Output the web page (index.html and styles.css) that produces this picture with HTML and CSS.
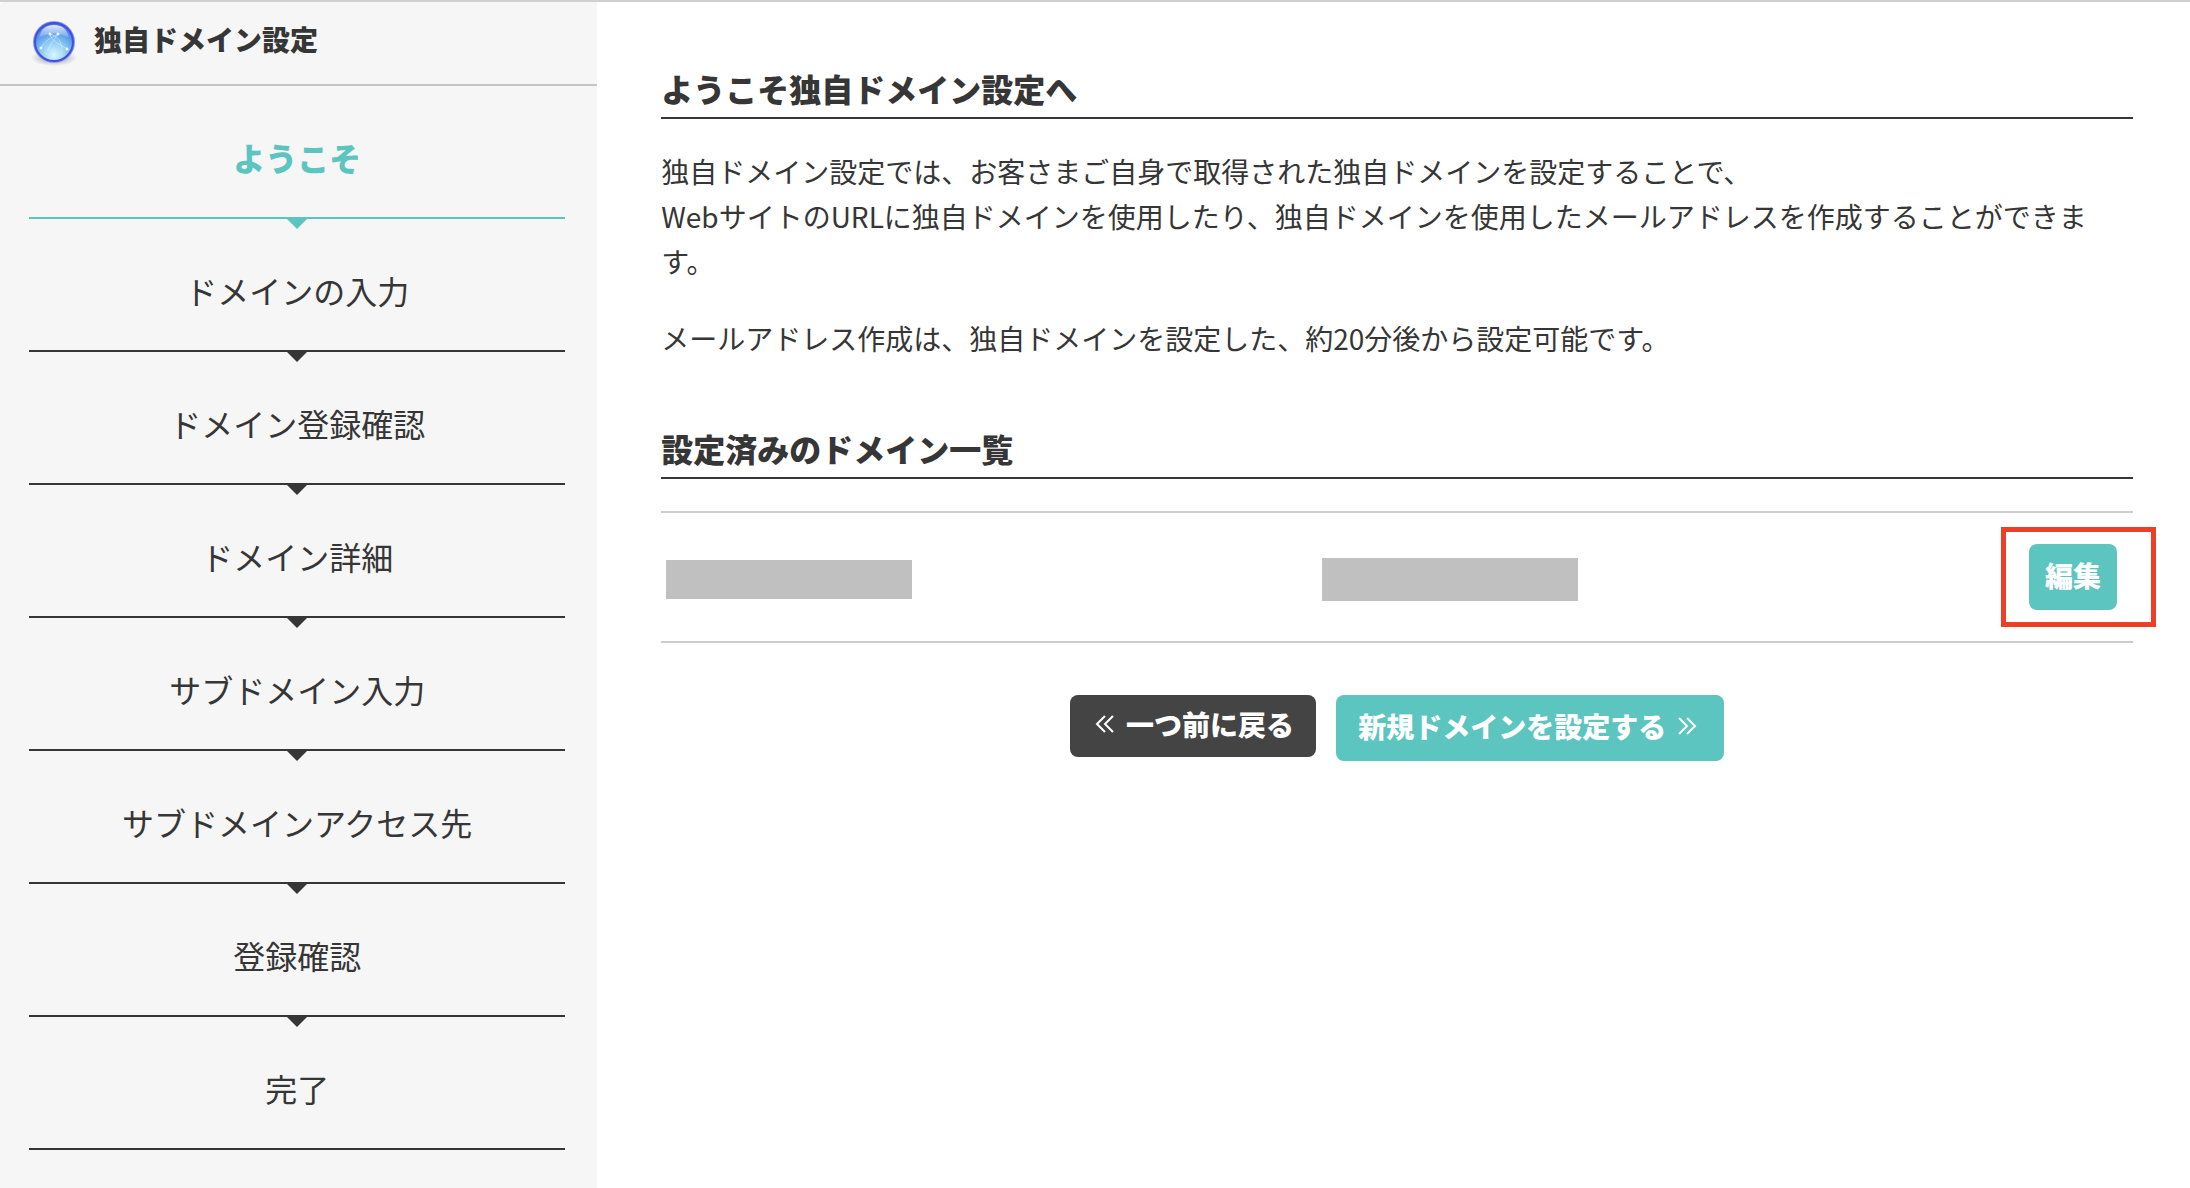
FILE: index.html
```html
<!DOCTYPE html>
<html lang="ja">
<head>
    <meta charset="UTF-8">
    <meta name="viewport" content="width=device-width, initial-scale=1.0">
    <title>独自ドメイン設定</title>
    <link rel="stylesheet" href="styles.css">
</head>
<body>
    <div class="layout">
        <aside class="sidebar">
            <header class="sidebar-header">
                <svg class="globe" viewBox="0 0 48 52" aria-hidden="true">
                    <defs>
                        <radialGradient id="globeFill" cx="50%" cy="82%" r="80%">
                            <stop offset="0" stop-color="#d8f8ff"/>
                            <stop offset="0.4" stop-color="#90ccf4"/>
                            <stop offset="0.7" stop-color="#5a9ce8"/>
                            <stop offset="1" stop-color="#4a68e4"/>
                        </radialGradient>
                        <linearGradient id="globeShine" x1="0" y1="0" x2="0" y2="1">
                            <stop offset="0" stop-color="#ffffff" stop-opacity="0.85"/>
                            <stop offset="1" stop-color="#ffffff" stop-opacity="0.1"/>
                        </linearGradient>
                        <radialGradient id="globeShadow">
                            <stop offset="0" stop-color="#000000" stop-opacity="0.4"/>
                            <stop offset="1" stop-color="#000000" stop-opacity="0"/>
                        </radialGradient>
                    </defs>
                    <ellipse cx="24" cy="41" rx="23" ry="8" fill="url(#globeShadow)"/>
                    <circle cx="24" cy="25" r="20" fill="url(#globeFill)" stroke="#8e98f0" stroke-width="2"/>
                    <circle cx="24" cy="25" r="19" fill="none" stroke="#3f50e2" stroke-width="2"/>
                    <path d="M9 21C11 11 17 8 24 8s13 3 15 13C30 15 18 15 9 21z" fill="url(#globeShine)"/>
                    <g fill="none" stroke="#d4f0ff" stroke-opacity="0.6">
                        <path d="M20 17c2 8 10 10 17 15M28 17c-5 7-9 12-12 21M11 31c4-7 9-10 17-14M20 17c10 3 14 12 11 23"/>
                    </g>
                    <g fill="#ffffff" fill-opacity="0.8">
                        <circle cx="20" cy="17" r="1.5"/>
                        <circle cx="28" cy="17" r="1.5"/>
                        <circle cx="11" cy="31" r="1.5"/>
                        <circle cx="37" cy="32" r="1.5"/>
                    </g>
                </svg>
                <h1 class="sidebar-title">独自ドメイン設定</h1>
            </header>
            <ol class="steps">
                <li class="step current" aria-current="step">ようこそ</li>
                <li class="step">ドメインの入力</li>
                <li class="step">ドメイン登録確認</li>
                <li class="step">ドメイン詳細</li>
                <li class="step">サブドメイン入力</li>
                <li class="step">サブドメインアクセス先</li>
                <li class="step">登録確認</li>
                <li class="step">完了</li>
            </ol>
        </aside>

        <main class="content">
            <section class="section">
                <h2 class="heading">ようこそ独自ドメイン設定へ</h2>
                <p>独自ドメイン設定では、お客さまご自身で取得された独自ドメインを設定することで、<br>WebサイトのURLに独自ドメインを使用したり、独自ドメインを使用したメールアドレスを作成することができます。</p>
                <p>メールアドレス作成は、独自ドメインを設定した、約20分後から設定可能です。</p>
            </section>

            <section class="section">
                <h2 class="heading">設定済みのドメイン一覧</h2>
                <table class="domains">
                    <tbody>
                        <tr>
                            <td class="domain"><span class="mask"></span></td>
                            <td class="domain"><span class="mask mask-large"></span></td>
                            <td class="action">
                                <span class="highlight"><button type="button" class="button">編集</button></span>
                            </td>
                        </tr>
                    </tbody>
                </table>
            </section>

            <div class="buttons">
                <button type="button" class="button button-back">
                    <svg class="arrow" viewBox="0 0 28 28" aria-hidden="true"><path d="M13 6l-8 8 8 8M21 6l-8 8 8 8"/></svg>
                    一つ前に戻る
                </button>
                <button type="button" class="button button-next">
                    新規ドメインを設定する
                    <svg class="arrow" viewBox="0 0 28 28" aria-hidden="true"><path d="M5 6l8 8-8 8M13 6l8 8-8 8"/></svg>
                </button>
            </div>
        </main>
    </div>
</body>
</html>
```
FILE: styles.css
```css
:root {
    --text: #363636;
    --accent: #5cc5c0;
    --dark: #444444;
    --line: #cccccc;
    --sidebar-line: #c4c4c4;
    --sidebar-bg: #f6f6f6;
    --mask: #c0c0c0;
    --highlight: #eb4026;
}

* {
    box-sizing: border-box;
}

body {
    margin: 0;
    background: #ffffff;
    color: var(--text);
    font-family: "Noto Sans CJK JP", sans-serif;
    font-size: 28px;
    line-height: 45px;
}

.layout {
    display: grid;
    grid-template-columns: 3fr 8fr;
    min-height: 100vh;
    border-top: 2px solid #d0d0d0;
}

/* Sidebar */
.sidebar {
    background: var(--sidebar-bg);
    border-top-left-radius: 4px;
}

.sidebar-header {
    display: flex;
    align-items: center;
    gap: 16px;
    height: 84px;
    padding: 0 30px 8px;
    border-bottom: 2px solid var(--sidebar-line);
}

.globe {
    width: 48px;
    height: 52px;
    flex: none;
    margin-top: 8px;
}

.sidebar-title {
    margin: 0;
    font-size: 28px;
    font-weight: 900;
}

.steps {
    list-style: none;
    margin: 0;
    padding: 0 32px 0 29px;
}

.step {
    position: relative;
    padding: 47px 0 36px;
    border-bottom: 2px solid var(--text);
    font-size: 32px;
    line-height: 48px;
    text-align: center;
}

/* arrow below the divider */
.step:not(:last-child)::after {
    content: "";
    position: absolute;
    top: 100%;
    left: 50%;
    margin: 2px 0 0 -10px;
    border: 10px solid transparent;
    border-top-color: var(--text);
    border-bottom: 0;
}

.step.current {
    color: var(--accent);
    border-bottom-color: var(--accent);
    font-weight: 900;
}

.step.current::after {
    border-top-color: var(--accent);
}

/* Main content */
.content {
    min-width: 0;
    padding: 62px 57px 64px 64px;
}

.section {
    margin-bottom: 52px;
}

.heading {
    margin: 0 0 30px;
    padding-bottom: 5px;
    border-bottom: 2px solid var(--text);
    font-size: 32px;
    font-weight: 900;
    line-height: 48px;
}

.section p {
    margin: 0 0 32px;
}

.section p + p {
    margin-bottom: 63px;
}

.domains {
    width: 100%;
    margin-top: 32px;
    table-layout: fixed;
    border-collapse: separate;
    border-spacing: 0;
    border-top: 2px solid var(--line);
    border-bottom: 2px solid var(--line);
}

.domains td {
    height: 128px;
    padding: 0;
    vertical-align: middle;
}

.domains .domain {
    width: 656px;
    padding: 5px 5px 0;
}

.mask {
    display: block;
    width: 246px;
    max-width: 100%;
    height: 39px;
    background: var(--mask);
}

.mask-large {
    width: 256px;
    height: 43px;
}

.domains .action {
    padding-right: 16px;
}

.highlight {
    position: relative;
    display: block;
    width: 88px;
    margin-left: auto;
}

.highlight::after {
    content: "";
    position: absolute;
    inset: -17px -39px -17px -28px;
    border: 5px solid var(--highlight);
    pointer-events: none;
}

/* Buttons */
.button {
    display: flex;
    align-items: center;
    justify-content: center;
    height: 66px;
    padding: 0 16px 4px;
    border: 0;
    border-radius: 8px;
    background: var(--accent);
    color: #ffffff;
    font: inherit;
    font-weight: 900;
    white-space: nowrap;
    cursor: pointer;
}

.buttons {
    display: flex;
    flex-wrap: wrap;
    justify-content: center;
    align-items: flex-start;
    gap: 20px;
}

.button-back {
    gap: 6px;
    height: 62px;
    padding: 0 22px 4px;
    background: var(--dark);
}

.button-next {
    gap: 8px;
    padding: 0 22px 4px;
}

.arrow {
    width: 28px;
    height: 28px;
    flex: none;
    fill: none;
    stroke: currentColor;
    stroke-width: 2;
}
```
